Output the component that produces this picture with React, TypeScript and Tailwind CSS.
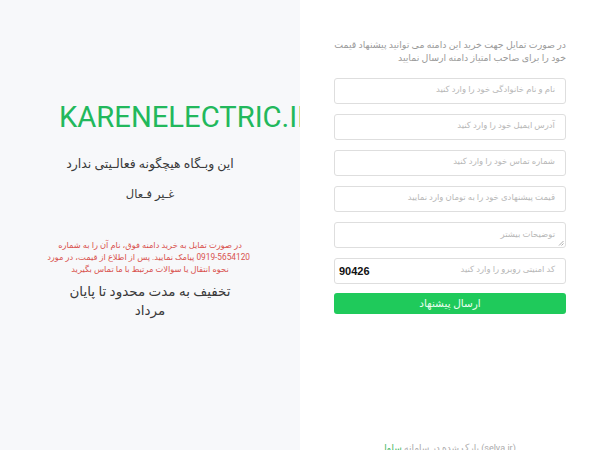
const fa = { fontFamily: "Roboto, 'DejaVu Sans', sans-serif" };

function Field({ placeholder }: { placeholder: string }) {
  return (
    <div className="h-[26px] border border-[#dedede] rounded-[3px] bg-white flex items-center justify-end px-[10px] pb-[3px]">
      <span className="text-[8.5px] text-[#b8b8b8] whitespace-nowrap">{placeholder}</span>
    </div>
  );
}

export default function App() {
  return (
    <div dir="ltr" className="flex h-[450px] w-[600px] overflow-hidden bg-white" style={fa}>
      <div className="w-[300px] shrink-0 bg-[#f7f8fa] overflow-hidden pt-[99px]">
        <div className="pl-[59px] whitespace-nowrap text-[29.2px] leading-[36px] text-[#22b85c]">
          KARENELECTRIC.IR
        </div>
        <div dir="rtl" className="ml-[50px] w-[200px] text-center">
          <div className="mt-[19px] text-[12.5px] leading-[20px] text-[#3a3a3a] whitespace-nowrap">
            این وبـگاه هیچگونه فعالـیتی ندارد
          </div>
          <div className="mt-[10px] text-[11.5px] leading-[20px] text-[#3a3a3a]">غـیر فـعال</div>
          <div className="mt-[35px] text-[8.3px] leading-[12px] text-[#d9534f] whitespace-nowrap">
            <div>در صورت تمایل به خرید دامنه فوق، نام آن را به شماره</div>
            <div>0919-5654120 پیامک نمایید. پس از اطلاع از قیمت، در مورد</div>
            <div>نحوه انتقال یا سوالات مرتبط با ما تماس بگیرید</div>
          </div>
          <div className="mt-[7px] text-[13.5px] leading-[19px] text-[#3a3a3a]">
            <div className="whitespace-nowrap">تخفیف به مدت محدود تا پایان</div>
            <div>مرداد</div>
          </div>
        </div>
      </div>

      <div className="w-[300px] shrink-0 px-[34px] pt-[38px] flex flex-col relative">
        <div dir="rtl" className="text-[9.4px] leading-[13px] text-[#9a9a9a] text-right whitespace-nowrap">
          <div>در صورت تمایل جهت خرید این دامنه می توانید پیشنهاد قیمت</div>
          <div>خود را برای صاحب امتیاز دامنه ارسال نمایید</div>
        </div>
        <div className="mt-[14px] flex flex-col gap-[10px]">
          <Field placeholder="نام و نام خانوادگی خود را وارد کنید" />
          <Field placeholder="آدرس ایمیل خود را وارد کنید" />
          <Field placeholder="شماره تماس خود را وارد کنید" />
          <Field placeholder="قیمت پیشنهادی خود را به تومان وارد نمایید" />
          <div className="relative h-[26px] border border-[#dedede] rounded-[3px] bg-white flex items-start justify-end px-[10px] pt-[5px]">
            <span className="text-[8.5px] text-[#b8b8b8]">توضیحات بیشتر</span>
            <svg className="absolute right-[1px] bottom-[1px]" width="6" height="6" viewBox="0 0 6 6">
              <path d="M5.5 1 L1 5.5 M5.5 3.5 L3.5 5.5" stroke="#999" strokeWidth="0.8" />
            </svg>
          </div>
          <div className="h-[26px] border border-[#dedede] rounded-[3px] bg-white flex items-center justify-between pl-[4px] pr-[10px]">
            <span className="text-[11px] font-bold text-[#111]" style={{ fontFamily: "'Liberation Sans', sans-serif" }}>
              90426
            </span>
            <span className="text-[8.5px] text-[#b8b8b8] pb-[3px]">کد امنیتی روبرو را وارد کنید</span>
          </div>
        </div>
        <button className="mt-[9px] h-[21px] rounded-[3px] bg-[#1fca5b] text-[10.5px] text-[#eafff1] flex items-center justify-center">
          ارسال پیشنهاد
        </button>
        <div dir="rtl" className="absolute top-[442px] left-0 right-0 text-center text-[9px] text-[#aaa] whitespace-nowrap">
          (selva.ir) پارک شده در سامانه <span className="text-[#3cb560]">سلوا</span>
        </div>
      </div>
    </div>
  );
}
